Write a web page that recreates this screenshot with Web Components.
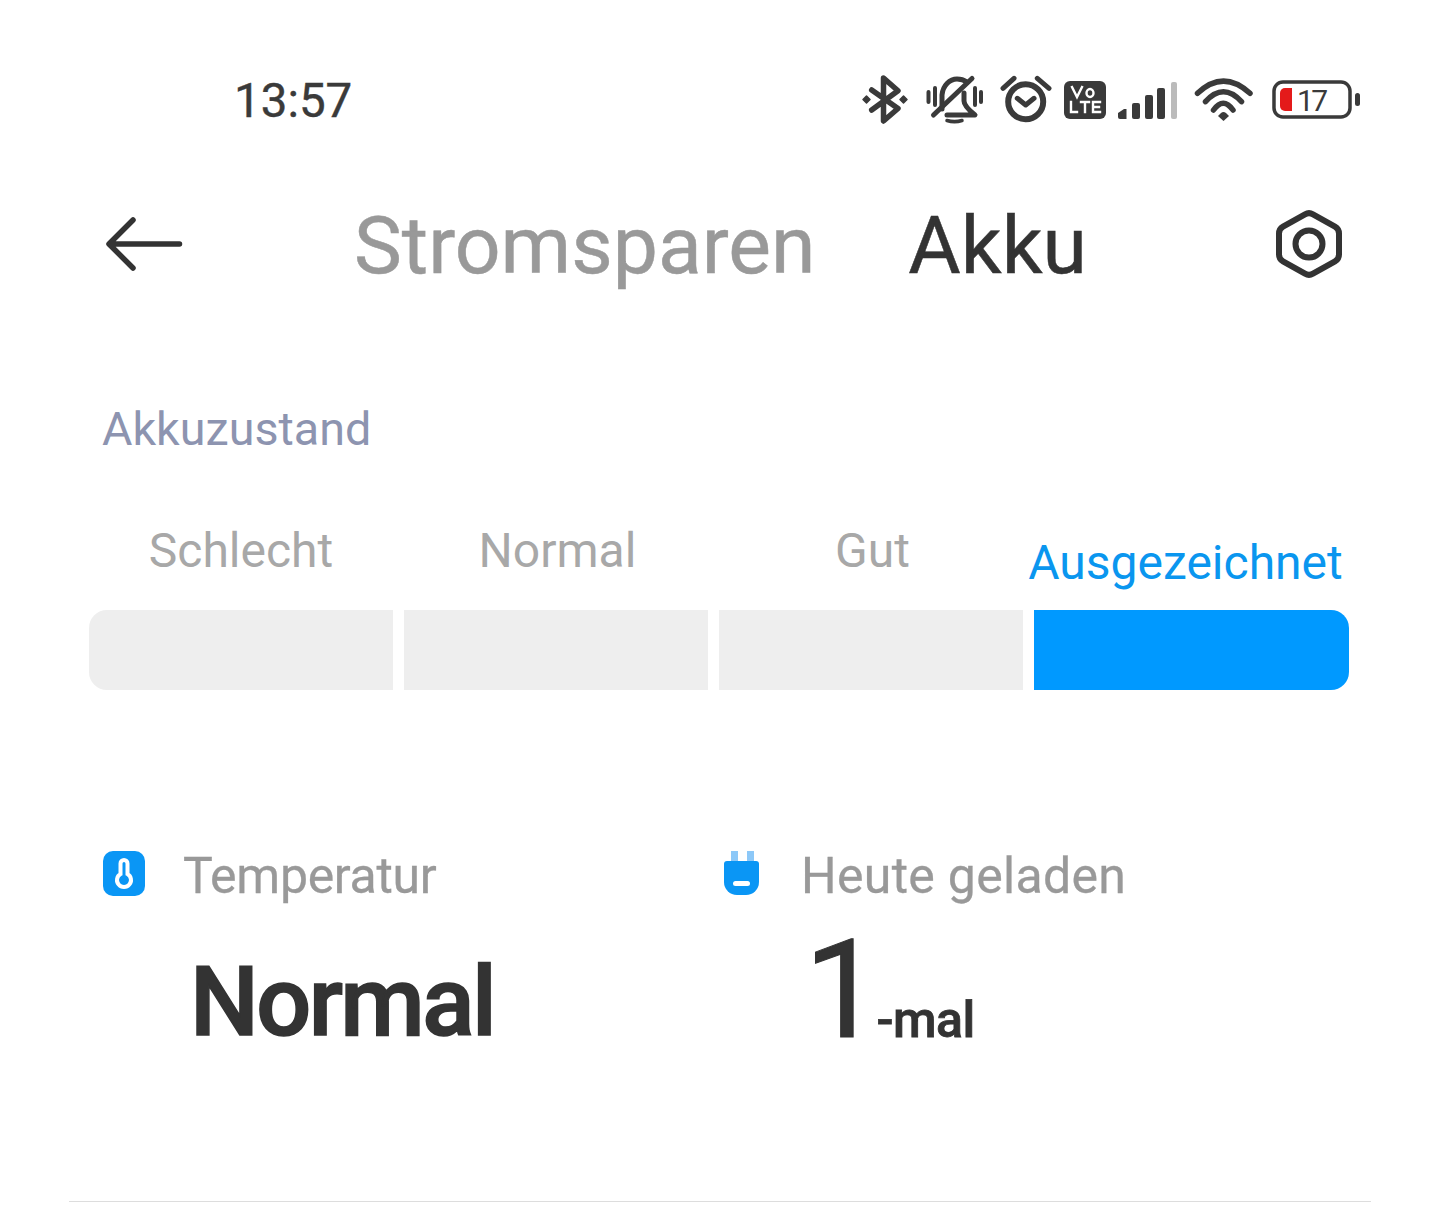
<!DOCTYPE html>
<html lang="de">
<head>
<meta charset="utf-8">
<title>Akku</title>
<style>
  html, body { margin: 0; background: #fff; }
  body { font-family: Roboto, "Liberation Sans", sans-serif; color: #333; width: 1440px; height: 1214px; overflow: hidden; }
</style>
</head>
<body>
<status-bar></status-bar>
<title-bar></title-bar>
<health-meter></health-meter>
<stat-row>
  <stat-item label="Temperatur" value="Normal" icon="thermo"></stat-item>
  <stat-item label="Heute geladen" value="1" unit="-mal" icon="plug"></stat-item>
</stat-row>
<script>
class StatusBar extends HTMLElement {
  constructor() {
    super();
    this.attachShadow({ mode: 'open' }).innerHTML = `
    <style>
      :host { display: flex; align-items: center; height: 68px; padding: 66px 80px 0 234px; color: #3a3a3a; }
      .time { font-size: 47.500px; line-height: 68px; position: relative; top: 1px; -webkit-text-stroke: 0.4px #3a3a3a; }
      .icons { display: flex; align-items: center; margin-left: auto; height: 50px; }
      svg { display: block; flex: none; overflow: visible; }
      .batt { position: relative; width: 88px; height: 40px; margin-left: 19px; }
      .batt span { position: absolute; left: 25px; top: 1px; font-size: 30px; line-height: 40px; letter-spacing: -2.500px; }
    </style>
    <div class="time">13:57</div>
    <div class="icons">
      <svg width="46" height="50" viewBox="0 0 46 50" fill="none" stroke="#3a3a3a" stroke-width="5.500" stroke-linecap="round" stroke-linejoin="round">
        <path d="M9.700 15 36 33.500 21.500 46V3L36 15.700 9.700 35"/>
        <path d="M1 24.500 4.500 21 8 24.500 4.500 28ZM38 24.500 41.500 21 45 24.500 41.500 28Z" fill="#3a3a3a" stroke-width="1.500"/>
      </svg>
      <svg style="margin-left:18px" width="58" height="50" viewBox="0 0 58 50" fill="none" stroke="#3a3a3a" stroke-width="5" stroke-linecap="round" stroke-linejoin="round">
        <path d="M2.500 17V27M9 13V30M49 13V30M55 17V27" stroke-width="4"/>
        <path d="M16 34V20C17 10 24 4 31 4 35 4 38 5 41 7M38 18V26C38 31 44 36 49 40H21"/>
        <path d="M7.500 40 46 3.500"/>
        <path d="M21 45.500C26 47 31 47 36 45.500" stroke-width="3.500"/>
      </svg>
      <svg style="margin-left:16px" width="52" height="50" viewBox="0 0 52 50" fill="none" stroke="#3a3a3a" stroke-width="5" stroke-linecap="round" stroke-linejoin="round">
        <circle cx="25.700" cy="26.700" r="17.500" stroke-width="6"/>
        <path d="M17.300 23.300 25.700 30 34 23.300M3 13.300 14 3.300M37.300 3.300 49 13.300"/>
      </svg>
      <div style="margin-left:12px;position:relative;width:42px;height:38px">
        <svg width="42" height="38" viewBox="0 0 42 38">
          <rect width="42" height="38" rx="6" fill="#3a3a3a"/>
          <g fill="none" stroke="#fff" stroke-width="2.400" stroke-linecap="square">
            <path d="M8 6 13 16 18 6"/>
            <ellipse cx="26" cy="12" rx="3.500" ry="4"/>
            <path d="M7 21V31H13M17 21H25M21 21V31M36 21H29V31H36M29 26H35"/>
          </g>
        </svg>
      </div>
      <svg style="margin-left:12px" width="60" height="40" viewBox="0 0 60 40">
        <g fill="#3a3a3a">
          <path d="M0 33 6 29H8.500V39H2A2 2 0 0 1 0 37Z"/>
          <rect x="14" y="23" width="8" height="16" rx="2"/>
          <rect x="27" y="15" width="8" height="24" rx="2"/>
          <rect x="39" y="8" width="8" height="31" rx="2"/>
        </g>
        <rect x="53" y="2" width="6" height="37" rx="2" fill="#bbb"/>
      </svg>
      <svg style="margin-left:17px" width="58" height="44" viewBox="0 0 58 44" fill="none" stroke="#3a3a3a" stroke-width="5.500" stroke-linecap="round">
        <path d="M2.500 15.300Q28.300 -9 55 15.300"/>
        <path d="M10.500 23.700Q28.300 4 46.500 23.700"/>
        <path d="M18.500 32Q28.300 18.500 38 32"/>
        <path d="M23 38 26 35Q28.300 33 31 35L34 38 28.500 43Z" fill="#3a3a3a" stroke="none"/>
      </svg>
      <div class="batt">
        <svg width="88" height="40" viewBox="0 0 88 40" fill="none">
          <rect x="2" y="2" width="76" height="35" rx="9" stroke="#3a3a3a" stroke-width="3.500"/>
          <path d="M13 8H20V31H13A5 5 0 0 1 8 26V13A5 5 0 0 1 13 8Z" fill="#e41a1a"/>
          <rect x="83" y="13" width="5" height="13" rx="2.500" fill="#3a3a3a"/>
        </svg>
        <span>17</span>
      </div>
    </div>`;
  }
}
customElements.define('status-bar', StatusBar);

class TitleBar extends HTMLElement {
  constructor() {
    super();
    this.attachShadow({ mode: 'open' }).innerHTML = `
    <style>
      :host { display: flex; align-items: center; height: 90px; margin-top: 65px; padding: 0 98px 0 106px; }
      svg { display: block; flex: none; }
      .tab { font-size: 80.500px; line-height: 90px; padding-top: 4px; white-space: nowrap; -webkit-text-stroke: 0.5px currentColor; }
      .off { margin-left: 171px; color: #999; }
      .on { margin-left: 93px; color: #333; }
      .hex { margin-left: auto; }
    </style>
    <svg width="77" height="56" viewBox="0 0 77 56" fill="none" stroke="#333" stroke-width="5.500" stroke-linecap="round" stroke-linejoin="round">
      <path d="M73.500 28H4M27 4 3 28 27 52"/>
    </svg>
    <span class="tab off">Stromsparen</span>
    <span class="tab on">Akku</span>
    <svg class="hex" width="66" height="70" viewBox="0 0 66 70" fill="none" stroke="#333" stroke-width="6" stroke-linejoin="round">
      <path d="M29 5.300Q33 3 37 5.300L59 17.700Q63 20 63 24.600V45.400Q63 50 59 52.300L37 64.700Q33 67 29 64.700L7 52.300Q3 50 3 45.400V24.600Q3 20 7 17.700Z"/>
      <circle cx="33" cy="35" r="13.500"/>
    </svg>`;
  }
}
customElements.define('title-bar', TitleBar);

class HealthMeter extends HTMLElement {
  constructor() {
    super();
    this.attachShadow({ mode: 'open' }).innerHTML = `
    <style>
      :host { display: block; padding: 0 91px 0 89px; }
      .head { margin: 110px 0 0 13px; font-size: 46.700px; line-height: 60px; color: #8d94b0; }
      .labels, .bars { display: grid; grid-template-columns: 304px 304px 304px 315px; column-gap: 11px; }
      .labels { margin-top: 63px; height: 88px; align-items: start; text-align: center; font-size: 48px; line-height: 58px; color: #a8a8a8; }
      .labels span { white-space: nowrap; }
      .shift { position: relative; left: 1.500px; }
      .active { color: #0a96ef; position: relative; top: 12px; left: -6px; }
      .bars div { height: 80px; background: #eee; }
      .bars div:first-child { border-radius: 18px 0 0 18px; }
      .bars .cur { background: #0099ff; border-radius: 0 18px 18px 0; }
    </style>
    <div class="head">Akkuzustand</div>
    <div class="labels">
      <span>Schlecht</span><span class="shift">Normal</span><span class="shift">Gut</span><span class="active">Ausgezeichnet</span>
    </div>
    <div class="bars"><div></div><div></div><div></div><div class="cur"></div></div>`;
  }
}
customElements.define('health-meter', HealthMeter);

class StatRow extends HTMLElement {
  constructor() {
    super();
    this.attachShadow({ mode: 'open' }).innerHTML = `
    <style>
      :host { display: block; margin: 0 69px; box-sizing: border-box; height: 512px; padding: 161px 0 0 34px; border-bottom: 1.500px solid #ddd; }
      .row { display: grid; grid-template-columns: 621px 1fr; }
    </style>
    <div class="row"><slot></slot></div>`;
  }
}
customElements.define('stat-row', StatRow);

const statIcons = {
  thermo: `<svg width="42" height="46" viewBox="0 0 42 46" fill="none">
    <rect width="42" height="45" rx="10" fill="#0a96f5"/>
    <path d="M17.500 23V12.500A3.500 3.500 0 0 1 24.500 12.500V23A7 7 0 1 1 17.500 23Z" stroke="#fff" stroke-width="4"/>
  </svg>`,
  plug: `<svg width="36" height="46" viewBox="0 0 36 46">
    <rect x="7" y="0" width="7" height="11" fill="#8cc8f8"/>
    <rect x="23" y="0" width="7" height="11" fill="#8cc8f8"/>
    <path d="M3 10H32A3 3 0 0 1 35 13V31A13 13 0 0 1 22 44H13A13 13 0 0 1 0 31V13A3 3 0 0 1 3 10Z" fill="#0a96f5"/>
    <rect x="9" y="30" width="17" height="5" rx="2.500" fill="#fff"/>
  </svg>`
};

class StatItem extends HTMLElement {
  constructor() {
    super();
    this.attachShadow({ mode: 'open' });
  }
  connectedCallback() {
    const unit = this.getAttribute('unit');
    const iconW = unit ? 77 : 80;
    this.shadowRoot.innerHTML = `
    <style>
      :host { display: block; }
      .top { display: flex; align-items: center; height: 46px; font-size: 50px; color: #999; white-space: nowrap; }
      .ic { width: ${iconW}px; flex: none; }
      .lab { padding-top: 4px; letter-spacing: ${unit ? 0.3 : -0.3}px; -webkit-text-stroke: 0.3px #999; }
      svg { display: block; }
      .val { display: flex; align-items: baseline; margin: ${unit ? 28 : 40}px 0 0 ${unit ? 80 : 87}px; height: 130px; white-space: nowrap; }
      b { font-size: ${unit ? 138 : 97}px; line-height: 130px; font-weight: ${unit ? 400 : 500}; letter-spacing: ${unit ? 0 : -2.6}px; color: #333; -webkit-text-stroke: ${unit ? 1 : 1.5}px #333; }
      i { font-style: normal; font-weight: 500; font-size: 50px; letter-spacing: -0.5px; margin-left: -5px; color: #333; -webkit-text-stroke: 0.8px #333; }
    </style>
    <div class="top"><span class="ic">${statIcons[this.getAttribute('icon')]}</span><span class="lab">${this.getAttribute('label')}</span></div>
    <div class="val"><b>${this.getAttribute('value')}</b>${unit ? `<i>${unit}</i>` : ''}</div>`;
  }
}
customElements.define('stat-item', StatItem);
</script>
</body>
</html>
